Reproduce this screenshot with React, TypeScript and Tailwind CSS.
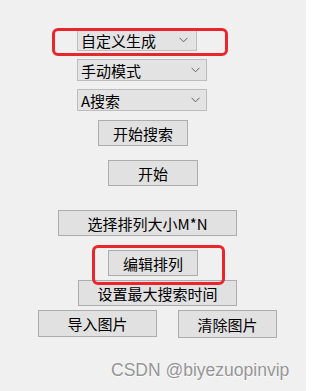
import React from "react";

const font = { fontFamily: '"Noto Sans CJK SC", "Liberation Sans", sans-serif' };

function Combo({ label, w, top, chevronRight }: { label: string; w: string; top: string; chevronRight: string }) {
  return (
    <div className={`ml-[77px] ${top} ${w} h-[22px] flex items-center justify-between border border-[#bdbdbd] bg-[#e3e3e3] pl-[3px] ${chevronRight}`}>
      <span className="text-[15px] leading-none text-black">{label}</span>
      <svg width="9" height="6" viewBox="0 0 9 6" className="shrink-0">
        <path d="M0.5 0.8 L4.5 4.8 L8.5 0.8" fill="none" stroke="#606060" strokeWidth="1" />
      </svg>
    </div>
  );
}

function Btn({ label, cls }: { label: string; cls: string }) {
  return (
    <div className={`${cls} flex items-center justify-center border border-[#adadad] bg-[#e1e1e1] text-[15px] leading-none text-black`}>
      {label}
    </div>
  );
}

export default function App() {
  return (
    <div className="relative w-[306px] h-[391px] overflow-hidden bg-[#f0f0f0] flex flex-col items-start" style={font}>
      <div className="h-[29px] shrink-0" />
      <Combo label="自定义生成" w="w-[120px]" top="mt-0" chevronRight="pr-[8px]" />
      <Combo label="手动模式" w="w-[130px]" top="mt-[8px]" chevronRight="pr-[6px]" />
      <Combo label="A搜索" w="w-[130px]" top="mt-[8px]" chevronRight="pr-[6px]" />
      <Btn label="开始搜索" cls="ml-[98px] mt-[9px] w-[90px] h-[26px]" />
      <Btn label="开始" cls="ml-[108px] mt-[14px] w-[90px] h-[26px]" />
      <Btn label="选择排列大小M*N" cls="ml-[58px] mt-[24px] w-[179px] h-[26px]" />
      <Btn label="编辑排列" cls="ml-[108px] mt-[14px] w-[90px] h-[26px]" />
      <Btn label="设置最大搜索时间" cls="ml-[78px] mt-[4px] w-[159px] h-[26px]" />
      <div className="mt-[4px] flex items-start">
        <Btn label="导入图片" cls="ml-[38px] w-[119px] h-[27px]" />
        <Btn label="清除图片" cls="ml-[21px] w-[99px] h-[28px]" />
      </div>

      <div className="absolute left-[52px] top-[28px] w-[176px] h-[28px] border-[3px] border-[#e8262b] rounded-[6px]" />
      <div className="absolute left-[92px] top-[245px] w-[133px] h-[40px] border-[3px] border-[#e8262b] rounded-[6px]" />

      <div
        className="absolute left-[111px] top-[359px] text-[17.5px] leading-[22px] text-[#969696] whitespace-nowrap [text-shadow:0_1px_1px_rgba(255,255,255,0.9)]"
        style={{ fontFamily: '"Liberation Sans", Arial, sans-serif' }}
      >
        CSDN @biyezuopinvip
      </div>
    </div>
  );
}
